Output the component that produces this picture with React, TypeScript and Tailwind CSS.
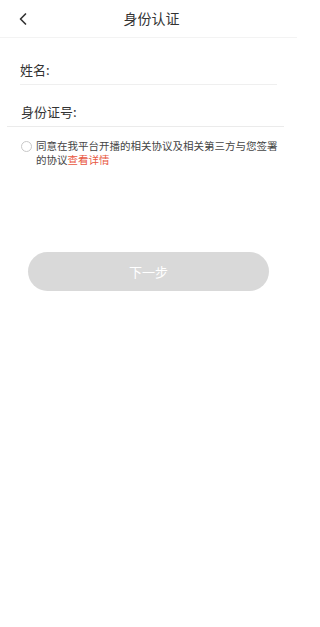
import { ChevronLeft } from "lucide-react"

const font = { fontFamily: '"Noto Sans CJK SC", "Noto Sans", sans-serif' }

export default function App() {
  return (
    <div className="w-[297px] min-h-[627px] bg-white flex flex-col" style={font}>
      {/* Header */}
      <div className="h-[38px] flex items-center border-b border-[#f3f3f3] relative">
        <ChevronLeft className="w-[20px] h-[20px] ml-[13px] text-[#333]" strokeWidth={2} />
        <span className="absolute left-0 right-0 pl-[6px] text-center text-[14px] text-[#333] pointer-events-none">身份认证</span>
      </div>

      {/* Form */}
      <div className="pt-[20px]">
        <div className="mx-[20px] h-[26px] flex items-center border-b border-[#efefef] box-content">
          <span className="text-[13px] text-[#333] leading-none pb-[4px]">姓名:</span>
        </div>
        <div className="mt-[15px] pl-[7px] pr-[13px]">
          <div className="h-[26px] flex items-center border-b border-[#ebebeb] box-content pl-[14px]">
            <span className="text-[13px] text-[#333] leading-none pb-[4px]">身份证号:</span>
          </div>
        </div>
      </div>

      {/* Agreement */}
      <div className="flex items-start pl-[21px] pr-[15px] mt-[12px]">
        <span className="w-[11px] h-[11px] mt-[2px] rounded-full border border-[#c8c8c8] shrink-0" />
        <div className="ml-[4px] flex flex-col text-[10.5px] leading-[13.5px] text-[#444]">
          <span className="whitespace-nowrap">同意在我平台开播的相关协议及相关第三方与您签署</span>
          <div className="flex">
            <span>的协议</span>
            <span className="text-[#e8573f]">查看详情</span>
          </div>
        </div>
      </div>

      {/* Button */}
      <div className="px-[28px] mt-[86px]">
        <button className="w-full h-[39px] rounded-full bg-[#d9d9d9] text-white text-[13px]">下一步</button>
      </div>
    </div>
  )
}
